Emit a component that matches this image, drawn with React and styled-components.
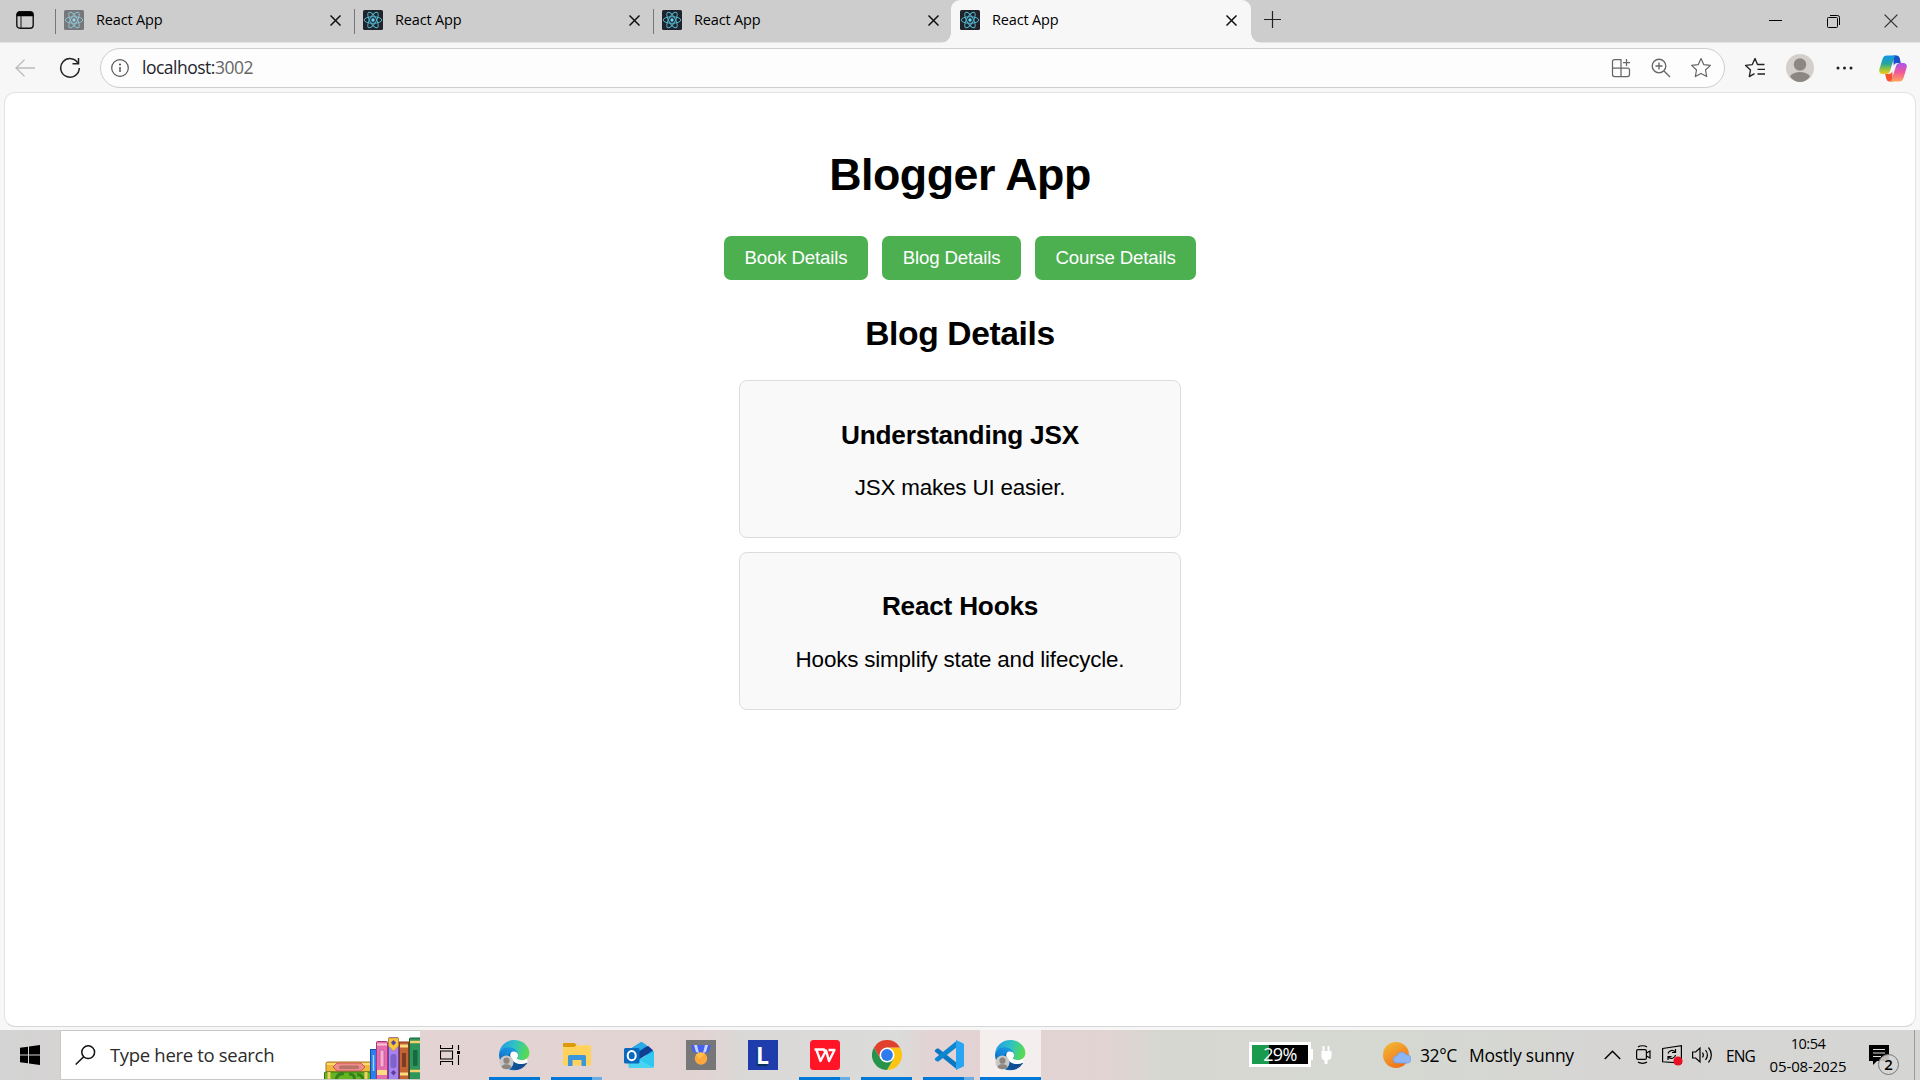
import React from "react";
import styled, { createGlobalStyle } from "styled-components";

const GlobalStyle = createGlobalStyle`
  * { box-sizing: border-box; }
  body { margin: 0; background: #f7f7f7; overflow: hidden; }
  svg { display: block; flex: none; }
`;

const UI_FONT = `"Open Sans", "Noto Sans", sans-serif`;
const PAGE_FONT = `"Liberation Sans", Arial, sans-serif`;

const Screen = styled.div`
  width: 1920px;
  height: 1080px;
  display: flex;
  flex-direction: column;
  background: #f7f7f7;
  font-family: ${UI_FONT};
  color: #000;
`;

/* ---------- browser chrome ---------- */

const TabStrip = styled.div`
  flex: none;
  height: 43px;
  display: flex;
  background: #cdcdcd;
  border-bottom: 1px solid #e4e4e4;
`;

const TabActions = styled.div`
  width: 55px;
  padding: 11px 0 0 16px;
`;

const TabItem = styled.div`
  position: relative;
  width: ${(p) => (p.$active ? 300 : p.$last ? 298 : 299)}px;
  height: 43px;
  padding: 0 ${(p) => (p.$active ? 10 : p.$last ? 8 : 9)}px 9px 9px;
  display: flex;
  align-items: center;
  background: ${(p) => (p.$active ? "#f7f7f7" : "transparent")};
  border-radius: ${(p) => (p.$active ? "9px 9px 0 0" : "0")};
  &::before {
    content: "";
    display: ${(p) => (p.$active ? "none" : "block")};
    position: absolute;
    left: 0;
    top: 9px;
    width: 1px;
    height: 25px;
    background: #777;
  }
`;

const TabFoot = styled.span`
  position: absolute;
  bottom: 0;
  ${(p) => (p.$side === "left" ? "left: -10px;" : "right: -10px;")}
  width: 10px;
  height: 10px;
  background: radial-gradient(
    circle at ${(p) => (p.$side === "left" ? "0 0" : "100% 0")},
    transparent 9.5px,
    #f7f7f7 10px
  );
`;

const Favicon = styled.div`
  width: 20px;
  height: 20px;
  margin-top: 6px;
  opacity: ${(p) => (p.$dim ? 0.5 : 1)};
`;

const TabTitle = styled.span`
  flex: 1;
  margin: 5px 0 0 12px;
  font-size: 14.5px;
  line-height: 20px;
  letter-spacing: -0.16px;
`;

const TabClose = styled.div`
  margin: 7px 4px 0 0;
`;

const NewTab = styled.div`
  padding: 11px 0 0 13px;
  flex: 1;
`;

const WindowButton = styled.div`
  width: 58px;
  display: flex;
  align-items: center;
  justify-content: center;
`;

const Toolbar = styled.div`
  flex: none;
  height: 50px;
  display: flex;
  align-items: center;
`;

const NavButton = styled.div`
  width: ${(p) => p.$w}px;
  display: flex;
  align-items: center;
  justify-content: center;
`;

const AddressBar = styled.div`
  width: 1625px;
  height: 40px;
  margin-right: 7px;
  padding: 0 3px 0 10px;
  display: flex;
  align-items: center;
  background: #fdfdfd;
  border: 1px solid #cdcdcd;
  border-radius: 20px;
`;

const Url = styled.span`
  flex: 1;
  margin: 0 0 2px 13px;
  font-size: 17.5px;
  line-height: 24px;
  letter-spacing: -0.5px;
  color: #25252d;
`;

const Port = styled.span`
  color: #666;
`;

/* ---------- page ---------- */

const PageFrame = styled.main`
  flex: none;
  width: 1912px;
  height: 935px;
  margin: -1px 0 3px 4px;
  padding-top: 56px;
  display: flex;
  flex-direction: column;
  align-items: center;
  background: #fff;
  border: 1px solid #e3e3e3;
  border-bottom: 1px solid #d6d6d8;
  border-radius: 11px;
  font-family: ${PAGE_FONT};
`;

const Heading = styled.h1`
  margin: 0 0 36px;
  font-size: 44.8px;
  line-height: 51px;
  letter-spacing: -0.5px;
`;

const ButtonRow = styled.div`
  display: flex;
  gap: 14px;
`;

const GreenButton = styled.button`
  width: ${(p) => p.$w}px;
  height: 44px;
  padding: 0;
  border: none;
  border-radius: 7px;
  background: #4caf50;
  color: #fff;
  font-family: ${PAGE_FONT};
  font-size: 18.67px;
  letter-spacing: -0.15px;
`;

const SectionTitle = styled.h2`
  margin: 35px 0 27px;
  font-size: 33.6px;
  line-height: 38px;
  letter-spacing: -0.36px;
`;

const Card = styled.article`
  width: 442px;
  height: 158px;
  margin-bottom: 14px;
  padding-top: ${(p) => (p.$first ? 39 : 38)}px;
  border: 1px solid #ddd;
  border-radius: 8px;
  background: #f9f9f9;
  text-align: center;
`;

const CardTitle = styled.h3`
  margin: 0 0 ${(p) => (p.$first ? 25 : 26)}px;
  font-size: 26.2px;
  line-height: 30px;
  letter-spacing: -0.22px;
`;

const CardText = styled.p`
  margin: 0;
  font-size: 22.4px;
  line-height: 25px;
  letter-spacing: -0.17px;
`;

/* ---------- taskbar ---------- */

const Taskbar = styled.footer`
  flex: none;
  height: 50px;
  display: flex;
  background: linear-gradient(
    90deg,
    #d3d4d3 0,
    #d6d3d3 60px,
    #e3d3d3 380px,
    #e2d3d3 700px,
    #dad9d8 745px,
    #dbdbd9 900px,
    #e3d3d4 930px,
    #e2d3d3 1100px,
    #d7d7d2 1160px,
    #d5d8d2 1450px,
    #d6d5d4 1600px,
    #d5d6d3 1920px
  );
`;

const StartButton = styled.div`
  width: 60px;
  padding: 15px 0 0 20px;
`;

const SearchBox = styled.div`
  width: 360px;
  height: 50px;
  display: flex;
  align-items: center;
  padding-left: 14px;
  overflow: hidden;
  background: #fff;
  border: 1px solid #c9c9c9;
  border-right: none;
`;

const SearchText = styled.span`
  flex: 1;
  margin: 0 0 1px 14px;
  font-size: 18.5px;
  line-height: 26px;
  letter-spacing: -0.32px;
  white-space: nowrap;
  color: #2b2b2b;
`;

const TaskView = styled.div`
  width: 64px;
  padding: 15px 0 0 20px;
`;

const AppList = styled.div`
  width: 764px;
  display: flex;
  gap: 1px;
`;

const AppCell = styled.div`
  width: 61px;
  height: 50px;
  display: flex;
  flex-direction: column;
  align-items: center;
  justify-content: space-between;
  padding-top: 10px;
  background: ${(p) => (p.$active ? "#f4eeee" : "transparent")};
`;

const Underline = styled.div`
  width: ${(p) => (p.$active ? 61 : 51)}px;
  height: 3px;
  background: ${(p) =>
    p.$kind === "none"
      ? "transparent"
      : p.$kind === "stack"
      ? "linear-gradient(90deg, #0078d7 41px, #69aee3 41px)"
      : "#0078d7"};
`;

const AppTile = styled.div`
  width: 30px;
  height: 30px;
  display: flex;
  align-items: center;
  justify-content: center;
  background: #1f3cad;
  color: #fff;
  font: bold 23px/30px "Open Sans", sans-serif;
  text-shadow: -1px 2px 1px #07324f;
`;

const Battery = styled.div`
  width: 62px;
  height: 25px;
  margin: 12px 0 0 1px;
  border: 3px solid #fff;
  background: linear-gradient(90deg, #199a4c 17px, #000 17px);
  color: #fff;
  font-size: 18px;
  line-height: 19px;
  letter-spacing: -0.6px;
  text-align: center;
`;

const TrayIcon = styled.div`
  margin: ${(p) => p.$top}px 0 0 ${(p) => p.$gap}px;
`;

const Weather = styled.div`
  width: 183px;
  margin-left: 9px;
  padding-top: 12px;
  display: flex;
  font-size: 17.5px;
  line-height: 26px;
  letter-spacing: -0.25px;
  white-space: nowrap;
`;

const Temperature = styled.span`
  width: 49px;
  letter-spacing: -0.4px;
`;

const Language = styled.span`
  width: 43px;
  margin: 14px 0 0 13px;
  font-size: 15.5px;
  line-height: 24px;
  letter-spacing: -0.9px;
`;

const Clock = styled.div`
  width: 78px;
  padding-top: 2px;
  text-align: center;
  font-size: 14.5px;
  line-height: 23px;
  letter-spacing: -0.5px;
  white-space: nowrap;
`;

const ClockDate = styled.div`
  font-size: 15px;
  letter-spacing: -0.15px;
`;

const Notifications = styled.div`
  position: relative;
  margin: 15px 0 0 22px;
  width: 20px;
  height: 20px;
`;

const Badge = styled.span`
  position: absolute;
  left: 9px;
  top: 9px;
  width: 21px;
  height: 21px;
  border: 1px solid #777;
  border-radius: 50%;
  background: rgba(214, 214, 212, 0.88);
  font-size: 15px;
  font-weight: 600;
  line-height: 19px;
  text-align: center;
`;

const ShowDesktop = styled.div`
  width: 6px;
  margin-left: 25px;
  border-left: 1px solid #9b9b9b;
`;

/* ---------- drawings ---------- */

const ReactLogo = () => (
  <svg width="20" height="20" viewBox="0 0 20 20">
    <rect width="20" height="20" rx="1.5" fill="#20232a" />
    <g fill="none" stroke="#53b8d3" strokeWidth="0.95">
      <ellipse cx="10" cy="10" rx="8.8" ry="3.3" />
      <ellipse cx="10" cy="10" rx="8.8" ry="3.3" transform="rotate(60 10 10)" />
      <ellipse cx="10" cy="10" rx="8.8" ry="3.3" transform="rotate(120 10 10)" />
    </g>
    <circle cx="10" cy="10" r="1.7" fill="#61dafb" />
  </svg>
);

const CrossIcon = ({ size = 11, width = 1.5, color = "#111" }) => (
  <svg width={size} height={size} viewBox="0 0 11 11">
    <path d="M.5 .5l10 10M10.500 .5l-10 10" stroke={color} strokeWidth={width} />
  </svg>
);

const TabActionsIcon = () => (
  <svg width="18" height="18" viewBox="0 0 18 18">
    <rect x="0.8" y="0.8" width="16.4" height="16.4" rx="3" fill="none" stroke="#111" strokeWidth="1.4" />
    <path d="M.8 5.200V3.500A3 3 0 0 1 3.500 .8h11a3 3 0 0 1 2.700 2.700v1.700z" fill="#000" />
    <path d="M5 5v12" stroke="#333" strokeWidth="1.200" />
  </svg>
);

const BackIcon = () => (
  <svg width="20" height="18" viewBox="0 0 20 18" fill="none" stroke="#bcbcbc" strokeWidth="1.300">
    <path d="M9.500 .7L1 9l8.500 8.300M1 9h19" />
  </svg>
);

const ReloadIcon = () => (
  <svg width="22" height="22" viewBox="0 0 22 22" fill="none" stroke="#222" strokeWidth="1.500">
    <path d="M19.200 6.500A9.300 9.300 0 1 0 20.300 11" />
    <path d="M19.500 1v5.800h-6" />
  </svg>
);

const InfoIcon = () => (
  <svg width="18" height="18" viewBox="0 0 18 18" fill="none" stroke="#555" strokeWidth="1.200">
    <circle cx="9" cy="9" r="8.300" />
    <path d="M9 8v5" strokeWidth="1.500" />
    <circle cx="9" cy="5.500" r="0.500" fill="#555" />
  </svg>
);

const AppsIcon = () => (
  <svg width="20" height="20" viewBox="0 0 20 20" fill="none" stroke="#666" strokeWidth="1.250">
    <path d="M10 10V1.500H3.500a2 2 0 0 0-2 2v13a2 2 0 0 0 2 2h13a2 2 0 0 0 2-2V12a2 2 0 0 0-2-2zM1.500 10H10v8.500M15.500 1v7M12 4.500h7" />
  </svg>
);

const ZoomIcon = () => (
  <svg width="20" height="20" viewBox="0 0 20 20" fill="none" stroke="#666" strokeWidth="1.350">
    <circle cx="8" cy="8" r="6.800" />
    <path d="M13 13l6 6M8 4.500v7M4.500 8h7" />
  </svg>
);

const StarIcon = () => (
  <svg width="22" height="22" viewBox="0 0 22 22" fill="none" stroke="#666" strokeWidth="1.200" strokeLinejoin="round">
    <path d="M11 1.500l2.700 6.100 6.700.8-4.900 4.600 1.200 6.600L11 16.400l-5.700 3.200 1.200-6.600L1.600 8.400l6.700-.8z" />
  </svg>
);

const FavoritesIcon = () => (
  <svg width="22" height="22" viewBox="0 0 22 22" fill="none" stroke="#222" strokeWidth="1.350" strokeLinejoin="round">
    <path d="M20.500 7.500h-7L11 1.500 8.300 7.600l-6.700.8L6.500 13l-1.200 6.600 5.200-3" />
    <path d="M13.500 12.300h7.500M13.500 17h7.500" />
  </svg>
);

const Avatar = () => (
  <svg width="28" height="28" viewBox="0 0 28 28">
    <circle cx="14" cy="14" r="14" fill="#d3d0cc" />
    <circle cx="14" cy="10.500" r="6.200" fill="#8c8783" />
    <path d="M4 22.500C6.500 19 10 18 14 18s7.500 1 10 4.500C21.500 26 18 28 14 28S6.500 26 4 22.500z" fill="#8c8783" />
  </svg>
);

const CopilotIcon = () => (
  <svg width="28" height="27" viewBox="0 0 28 27">
    <defs>
      <linearGradient id="cpA" x1="0" y1="0" x2="0" y2="1">
        <stop offset="0" stopColor="#1495ea" />
        <stop offset=".45" stopColor="#24a69b" />
        <stop offset=".75" stopColor="#9ac43b" />
        <stop offset="1" stopColor="#f5c81b" />
      </linearGradient>
      <linearGradient id="cpB" x1="0" y1="0" x2="0" y2="1">
        <stop offset="0" stopColor="#a757ef" />
        <stop offset=".5" stopColor="#f0589b" />
        <stop offset="1" stopColor="#ffa45c" />
      </linearGradient>
    </defs>
    <path d="M14 .5h3.500c1.800 0 2.800 1 3.300 3l1 4.500h-3.500c-2 0-2.900.8-3.500 3z" fill="#1c50c6" />
    <path d="M14 26.500h-3.500c-1.800 0-2.800-1-3.300-3l-1-4.500h3.500c2 0 2.900-.8 3.500-3z" fill="#f5522d" />
    <path d="M8 .5h9.500c-1.500.3-2.100 1.500-2.700 3.500L11 16c-.7 2-1.800 3-3.800 3H3.700C.8 19-.3 17 .4 14.200L3.500 4C4.300 1.500 5.800.5 8 .5z" fill="url(#cpA)" />
    <path d="M20 26.500h-9.500c1.500-.3 2.100-1.500 2.700-3.500L17 11c.7-2 1.800-3 3.800-3h3.500c2.900 0 4 2 3.300 4.800L24.500 23c-.8 2.500-2.300 3.500-4.500 3.500z" fill="url(#cpB)" />
  </svg>
);

const WindowsIcon = () => (
  <svg width="20" height="20" viewBox="0 0 20 20">
    <path d="M0 2.800L8 1.700v7.800H0zM9 1.500L20 0v9.500H9zM0 10.500h8v7.800l-8-1.100zM9 10.500h11V20L9 18.500z" />
  </svg>
);

const SearchIcon = () => (
  <svg width="21" height="20" viewBox="0 0 21 20" fill="none" stroke="#111" strokeWidth="1.500">
    <circle cx="13.200" cy="7.200" r="6.400" />
    <path d="M8.700 11.800L.7 19.500" />
  </svg>
);

const BooksIcon = () => (
  <svg width="96" height="43" viewBox="0 0 96 43">
    <rect x="2" y="25" width="46" height="10" rx="1.500" fill="#f0b83b" stroke="#b17522" />
    <path d="M3 27h44" stroke="#ffda74" strokeWidth="2" />
    <path d="M9 30l4-4h24l4 4-4 4H13z" fill="#ee8b8b" stroke="#c85d58" />
    <rect x="15" y="28.500" width="20" height="3.500" rx="1.500" fill="#b87368" />
    <rect x="0.500" y="35" width="47" height="9" rx="1" fill="#65b421" stroke="#397516" />
    <path d="M5 35v8M42 35v8" stroke="#f5cf62" strokeWidth="3" />
    <path d="M12 42c2-5 5-6 8-5M25 37c5 0 6 3 5 6M33 38c3-1 5 1 6 4" stroke="#37811d" strokeWidth="3" fill="none" />
    <rect x="46.500" y="12.500" width="6" height="31" fill="#2b7fec" stroke="#1850a5" />
    <path d="M49.500 18v16" stroke="#9bd0ff" strokeWidth="1.500" />
    <rect x="52.500" y="4.500" width="11" height="39" rx="1" fill="#e56eaf" stroke="#a53677" />
    <path d="M53 7.500h10M53 37h10" stroke="#f9c7cf" strokeWidth="2" />
    <path d="M53 33h10v5H53z" fill="#ffdc84" />
    <rect x="56" y="13" width="4" height="17" rx="1.500" fill="#f5aed2" stroke="#c34f94" strokeWidth=".7" />
    <rect x="64.500" y=".8" width="10" height="43" rx="1" fill="#a883ef" stroke="#6a43a9" />
    <path d="M64.500 1h10v8l-5 5-5-5z" fill="#f6c63e" stroke="#bd861d" strokeWidth=".6" />
    <path d="M69.500 3l2.600 2.700-2.600 2.700-2.600-2.700zM69.500 33l2.600 2.700-2.600 2.700-2.600-2.700z" fill="#5b419d" />
    <rect x="66.500" y="17" width="6" height="14" rx="2.500" fill="#8062cb" />
    <rect x="75.500" y="5" width="9" height="39" fill="#c56332" stroke="#843b1c" />
    <path d="M76 9h8M76 37h8" stroke="#ffdb83" strokeWidth="3" />
    <rect x="78" y="16" width="4" height="14" fill="#7c3c25" />
    <rect x="85.500" y="1" width="11.500" height="43" rx="1" fill="#2e955b" stroke="#175e38" />
    <path d="M86 5h11M86 34h11" stroke="#f7cf6d" strokeWidth="2.500" />
    <rect x="89" y="13" width="4.500" height="16" rx="1" fill="#176942" />
  </svg>
);

const TaskViewIcon = () => (
  <svg width="21" height="20" viewBox="0 0 21 20" fill="none" stroke="#000" strokeWidth="1.100">
    <path d="M.5 0v3.500h12V0M.5 20v-3.500h12V20M.5 6h12v8H.5zM18.500 0v5M18.500 10v10" />
    <path d="M17 6h3v3h-3z" fill="#000" stroke="none" />
  </svg>
);

const EdgeIcon = ({ id }) => (
  <svg width="31" height="31" viewBox="0 0 31 31">
    <defs>
      <linearGradient id={id + "a"} x1="60" y1="170" x2="240" y2="200" gradientUnits="userSpaceOnUse">
        <stop offset="0" stopColor="#0c59a4" />
        <stop offset="1" stopColor="#114a8b" />
      </linearGradient>
      <linearGradient id={id + "b"} x1="150" y1="80" x2="50" y2="230" gradientUnits="userSpaceOnUse">
        <stop offset="0" stopColor="#1b9de2" />
        <stop offset=".5" stopColor="#1484d8" />
        <stop offset="1" stopColor="#0c59a4" />
      </linearGradient>
      <linearGradient id={id + "c"} x1="10" y1="50" x2="250" y2="120" gradientUnits="userSpaceOnUse">
        <stop offset="0" stopColor="#259de0" />
        <stop offset=".45" stopColor="#2ec2c6" />
        <stop offset="1" stopColor="#5bdd48" />
      </linearGradient>
    </defs>
    <g transform="scale(.1185)">
      <path fill={`url(#${id}a)`} d="M231.100 190.500c-3.400 1.800-6.900 3.400-10.500 4.700a101.700 101.700 0 0 1-35.900 6.500c-47.300 0-88.500-32.500-88.500-74.300a31.500 31.500 0 0 1 16.400-27.300c-42.800 1.800-53.800 46.400-53.800 72.500 0 74 68.100 81.400 82.800 81.400 7.900 0 19.800-2.300 27-4.600l1.300-.4a128.300 128.300 0 0 0 66.600-52.800 4 4 0 0 0-5.400-5.700z" />
      <path fill={`url(#${id}b)`} d="M105.700 241.400a79.200 79.200 0 0 1-22.700-21.300 80.700 80.700 0 0 1 29.500-120c3.200-1.500 8.500-4.100 15.600-4a32.400 32.400 0 0 1 25.700 13 31.900 31.900 0 0 1 6.300 18.700c0-.2 24.500-79.600-80-79.600-43.900 0-80 41.700-80 78.200a130.200 130.200 0 0 0 12.100 56 128 128 0 0 0 156.400 67 75.500 75.500 0 0 1-62.800-8z" />
      <path fill={`url(#${id}c)`} d="M152.300 148.900c-.9 1-3.400 2.500-3.400 5.600 0 2.600 1.700 5.200 4.800 7.300 14.300 10 41.400 8.600 41.500 8.600a59.600 59.600 0 0 0 30.300-8.300 61.400 61.400 0 0 0 30.400-52.900c.3-22.400-8-37.300-11.300-43.900C223.300 23.700 176.800 0 128 0A128 128 0 0 0 0 126.200c.5-36.500 36.800-66 80-66 3.500 0 23.500.3 42 10.100 16.400 8.600 24.900 18.900 30.800 29.200 6.200 10.700 7.300 24.100 7.300 29.500s-2.700 13.300-7.800 19.900z" />
      <path fill="#fff" d="M112 100c24-7 48 7 48 29 0 12-10 18-10 26 0 7 16 15 45 15 18 0 32-5 43-14l2 34c-15 7-33 12-55 12-47 0-89-33-89-75 0-12 6-22 16-27z" />
    </g>
    <circle cx="7.500" cy="22.500" r="7" fill="#cbc8c5" />
    <circle cx="7.500" cy="20.700" r="3.100" fill="#8b8682" />
    <path d="M2.500 27c1-2.200 2.800-2.700 5-2.700s4 .5 5 2.700c-2.500 3-7.500 3-10 0z" fill="#8b8682" />
  </svg>
);

const FolderIcon = () => (
  <svg width="28" height="30" viewBox="0 0 28 30">
    <path d="M0 4a1 1 0 0 1 1-1h10.500l2 1.800-1.500 3H0z" fill="#dc9a08" />
    <path d="M0 7h11.500l2-1.800H27a1 1 0 0 1 1 1V25.500H1a1 1 0 0 1-1-1z" fill="#ffd35b" />
    <path d="M5 26V16.500a1.500 1.500 0 0 1 1.500-1.500h15a1.500 1.500 0 0 1 1.500 1.500V26h-4.500v-6h-9v6z" fill="#3a96dd" />
  </svg>
);

const OutlookIcon = () => (
  <svg width="30" height="30" viewBox="0 0 30 30">
    <path d="M4.500 10L17 2l12 8.500v5H4.500z" fill="#159bdc" />
    <path d="M10 7l8-5 5 3.500L10 14z" fill="#2aa9e8" />
    <path d="M11 14L24 5.800l5 4.500L13 21z" fill="#103f91" />
    <path d="M15 19.500L30 11v14.500a2.500 2.500 0 0 1-2.500 2.500H7a2.500 2.500 0 0 1-2.500-2.500V14z" fill="#2fc7f0" />
    <path d="M15 19.500L30 28H7.500l-3-2.500V22z" fill="#52dbf5" opacity=".7" />
    <rect y="8" width="15.500" height="15.500" rx="1.500" fill="#0a68bd" />
    <ellipse cx="7.700" cy="15.700" rx="4" ry="4.600" fill="none" stroke="#fff" strokeWidth="2" />
  </svg>
);

const MedalIcon = () => (
  <svg width="30" height="30" viewBox="0 0 30 30">
    <rect width="30" height="30" fill="#777" />
    <path d="M5 5h20l-2 7-8 2-8-2z" fill="#4562ee" />
    <path d="M8 5h3l2 8-3-1zM19 5h3l-2 7-3 1z" fill="#c8d5ff" />
    <circle cx="15" cy="18.500" r="6.200" fill="#fca83c" />
    <path d="M10 15a6 6 0 0 1 9-1l-6 5z" fill="#ffc551" opacity=".8" />
  </svg>
);

const WpsIcon = () => (
  <svg width="30" height="30" viewBox="0 0 30 30">
    <rect width="30" height="30" rx="3.500" fill="#ff1526" />
    <path d="M4.500 9.500h9.500l1.500 4M6.500 10l4 11 5.500-10.500 3 10.500 5.500-11h-6" fill="none" stroke="#fff" strokeWidth="2.400" strokeLinejoin="round" />
  </svg>
);

const ChromeIcon = () => (
  <svg width="30" height="30" viewBox="0 0 30 30">
    <path d="M15 7.500h13A15 15 0 0 1 15 30l6.500-11.300z" fill="#fdc413" />
    <path d="M2 7.500A15 15 0 0 0 15 30l6.500-11.300L8.500 18.700z" fill="#27944b" />
    <path d="M15 7.500h13A15 15 0 0 0 2 7.500l6.500 11.200z" fill="#e2402f" />
    <circle cx="15" cy="15" r="7.500" fill="#fff" />
    <circle cx="15" cy="15" r="5.900" fill="#2f7bed" />
  </svg>
);

const CodeIcon = () => (
  <svg width="30" height="30" viewBox="0 0 30 30">
    <path d="M1 10l2-1.500 1.500.1L23 23v6.500L.8 11.500z" fill="#0a77c2" />
    <path d="M1 20l2 1.500 1.500-.1L23 7V.5L.8 18.500z" fill="#0d86d2" />
    <path d="M22 0l7 3.200a1.500 1.500 0 0 1 1 1.400v20.800a1.500 1.500 0 0 1-1 1.400L22 30z" fill="#2aa5f2" />
  </svg>
);

const PlugIcon = () => (
  <svg width="22" height="20" viewBox="0 0 22 20">
    <path d="M0 4h3v11H0z" fill="#fff" />
    <path d="M12.500 1h2v5h3V1h2v5h2v5c0 2.500-1.500 4-4 4.300V19h-3v-3.700C12 15 11.500 13 11.500 11V6h1z" fill="#fff" />
  </svg>
);

const SunIcon = () => (
  <svg width="28" height="27" viewBox="0 0 28 27">
    <defs>
      <linearGradient id="sun" x1="0" y1="0" x2=".6" y2="1">
        <stop offset="0" stopColor="#f2be36" />
        <stop offset="1" stopColor="#f2711b" />
      </linearGradient>
    </defs>
    <circle cx="13" cy="13" r="13" fill="url(#sun)" />
    <path d="M14 21a3.500 3.500 0 0 1-.5-7 5.500 5.500 0 0 1 10-1 4 4 0 0 1 .8 8z" fill="#8db6f4" stroke="#719ce8" strokeWidth=".8" />
  </svg>
);

const ChevronIcon = () => (
  <svg width="17" height="10" viewBox="0 0 17 10">
    <path d="M.8 9L8.500 1.200 16.200 9" fill="none" stroke="#000" strokeWidth="1.400" />
  </svg>
);

const CameraIcon = () => (
  <svg width="15" height="19" viewBox="0 0 15 19" fill="none" stroke="#000" strokeWidth="1.200">
    <rect x=".6" y="4.600" width="9.800" height="9.800" rx="1.500" />
    <path d="M10.500 8l3.500-2v7l-3.500-2M2 2C4 .3 9 .3 11 2M2 17c2 1.700 7 1.700 9 0" />
  </svg>
);

const UpdateIcon = () => (
  <svg width="21" height="21" viewBox="0 0 21 21" fill="none" stroke="#000" strokeWidth="1.200">
    <path d="M.6 3.500L19.400 .7v17.500L.6 16.800z" />
    <path d="M6 8.500a4 4 0 0 1 7-1.500M13.500 4v3.500H10M13.500 10a4 4 0 0 1-7 2M6 15v-3.500h3.500" />
    <circle cx="16" cy="16" r="4.600" fill="#e81123" stroke="none" />
  </svg>
);

const SpeakerIcon = () => (
  <svg width="21" height="18" viewBox="0 0 21 18" fill="none" stroke="#000" strokeWidth="1.200">
    <path d="M.6 6h3L8 2v14l-4.400-4h-3z" />
    <path d="M10.500 6.500c1 1.500 1 3.500 0 5M13.500 4c2.300 3 2.300 7 0 10M16.500 1.500c3.800 4.500 3.800 10.500 0 15" />
  </svg>
);

const NotesIcon = () => (
  <svg width="20" height="20" viewBox="0 0 20 20">
    <path d="M0 0h20v16H8l-4 4v-4H0z" />
    <path d="M4 4.500h12M4 8h12M4 11.500h8" stroke="#ddd" strokeWidth="1.200" />
  </svg>
);

/* ---------- data ---------- */

const tabs = [
  { id: 1, dim: true },
  { id: 2 },
  { id: 3, last: true },
  { id: 4, active: true },
];

const sections = [
  { label: "Book Details", width: 144 },
  { label: "Blog Details", width: 139 },
  { label: "Course Details", width: 161 },
];

const blogs = [
  { title: "Understanding JSX", text: "JSX makes UI easier." },
  { title: "React Hooks", text: "Hooks simplify state and lifecycle." },
];

const apps = [
  { id: "edge", icon: <EdgeIcon id="e1" />, line: "solid" },
  { id: "files", icon: <FolderIcon />, line: "stack" },
  { id: "outlook", icon: <OutlookIcon />, line: "none" },
  { id: "medal", icon: <MedalIcon />, line: "none" },
  { id: "l", icon: <AppTile>L</AppTile>, line: "none" },
  { id: "wps", icon: <WpsIcon />, line: "stack" },
  { id: "chrome", icon: <ChromeIcon />, line: "solid" },
  { id: "code", icon: <CodeIcon />, line: "stack" },
  { id: "edge2", icon: <EdgeIcon id="e2" />, line: "solid", active: true },
];

export default function App() {
  return (
    <Screen>
      <GlobalStyle />
      <TabStrip>
        <TabActions>
          <TabActionsIcon />
        </TabActions>
        {tabs.map((t) => (
          <TabItem key={t.id} $active={t.active} $last={t.last}>
            {t.active && <TabFoot $side="left" />}
            {t.active && <TabFoot $side="right" />}
            <Favicon $dim={t.dim}>
              <ReactLogo />
            </Favicon>
            <TabTitle>React App</TabTitle>
            <TabClose>
              <CrossIcon />
            </TabClose>
          </TabItem>
        ))}
        <NewTab>
          <svg width="17" height="17" viewBox="0 0 17 17">
            <path d="M8.500 0v17M0 8.500h17" stroke="#222" strokeWidth="1.200" />
          </svg>
        </NewTab>
        <WindowButton>
          <svg width="13" height="13" viewBox="0 0 13 13">
            <path d="M0 5.500h13" stroke="#000" />
          </svg>
        </WindowButton>
        <WindowButton>
          <svg width="13" height="13" viewBox="0 0 13 13" fill="none" stroke="#000">
            <rect x=".5" y="2.500" width="10" height="10" rx="1" />
            <path d="M3 .5h7.500a2 2 0 0 1 2 2V10" />
          </svg>
        </WindowButton>
        <WindowButton>
          <CrossIcon size={14} width={1} color="#333" />
        </WindowButton>
      </TabStrip>

      <Toolbar>
        <NavButton $w={50}>
          <BackIcon />
        </NavButton>
        <NavButton $w={40}>
          <ReloadIcon />
        </NavButton>
        <NavButton $w={10} />
        <AddressBar>
          <InfoIcon />
          <Url>
            localhost:<Port>3002</Port>
          </Url>
          <NavButton $w={40}>
            <AppsIcon />
          </NavButton>
          <NavButton $w={40}>
            <ZoomIcon />
          </NavButton>
          <NavButton $w={40}>
            <StarIcon />
          </NavButton>
        </AddressBar>
        <NavButton $w={45}>
          <FavoritesIcon />
        </NavButton>
        <NavButton $w={45}>
          <Avatar />
        </NavButton>
        <NavButton $w={45}>
          <svg width="17" height="4" viewBox="0 0 17 4" fill="#222">
            <circle cx="2" cy="2" r="1.500" />
            <circle cx="8.500" cy="2" r="1.500" />
            <circle cx="15" cy="2" r="1.500" />
          </svg>
        </NavButton>
        <NavButton $w={52}>
          <CopilotIcon />
        </NavButton>
      </Toolbar>

      <PageFrame>
        <Heading>Blogger App</Heading>
        <ButtonRow>
          {sections.map((s) => (
            <GreenButton key={s.label} $w={s.width}>
              {s.label}
            </GreenButton>
          ))}
        </ButtonRow>
        <SectionTitle>Blog Details</SectionTitle>
        {blogs.map((b, i) => (
          <Card key={b.title} $first={i === 0}>
            <CardTitle $first={i === 0}>{b.title}</CardTitle>
            <CardText>{b.text}</CardText>
          </Card>
        ))}
      </PageFrame>

      <Taskbar>
        <StartButton>
          <WindowsIcon />
        </StartButton>
        <SearchBox>
          <SearchIcon />
          <SearchText>Type here to search</SearchText>
          <TrayIcon $top={6} $gap={0}>
            <BooksIcon />
          </TrayIcon>
        </SearchBox>
        <TaskView>
          <TaskViewIcon />
        </TaskView>
        <AppList>
          {apps.map((a) => (
            <AppCell key={a.id} $active={a.active}>
              {a.icon}
              <Underline $kind={a.line} $active={a.active} />
            </AppCell>
          ))}
        </AppList>
        <Battery>29%</Battery>
        <TrayIcon $top={15} $gap={-1}>
          <PlugIcon />
        </TrayIcon>
        <TrayIcon $top={12} $gap={51}>
          <SunIcon />
        </TrayIcon>
        <Weather>
          <Temperature>32°C</Temperature>
          <span>Mostly sunny</span>
        </Weather>
        <TrayIcon $top={20} $gap={1}>
          <ChevronIcon />
        </TrayIcon>
        <TrayIcon $top={15} $gap={15}>
          <CameraIcon />
        </TrayIcon>
        <TrayIcon $top={15} $gap={11}>
          <UpdateIcon />
        </TrayIcon>
        <TrayIcon $top={16} $gap={9}>
          <SpeakerIcon />
        </TrayIcon>
        <Language>ENG</Language>
        <Clock>
          <div>10:54</div>
          <ClockDate>05-08-2025</ClockDate>
        </Clock>
        <Notifications>
          <NotesIcon />
          <Badge>2</Badge>
        </Notifications>
        <ShowDesktop />
      </Taskbar>
    </Screen>
  );
}
